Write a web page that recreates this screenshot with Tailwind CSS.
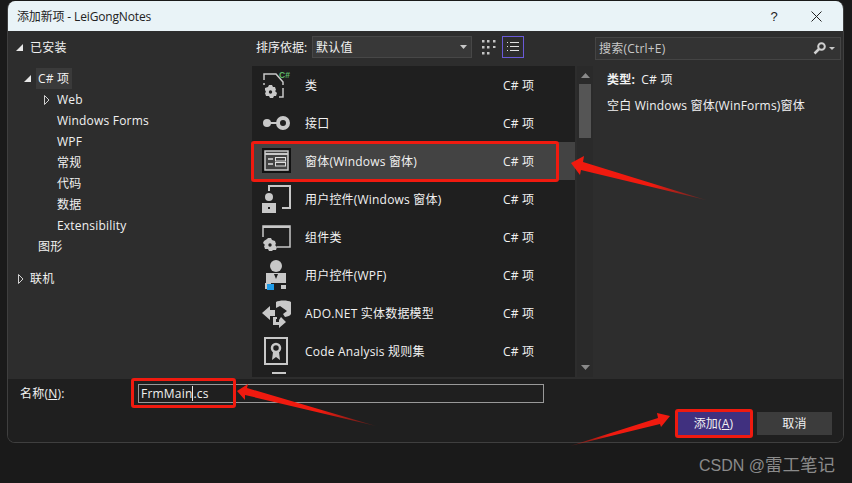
<!DOCTYPE html>
<html lang="zh">
<head>
    <meta charset="UTF-8">
    <title>添加新项 - LeiGongNotes</title>
    <script src="https://cdn.jsdelivr.net/npm/@tailwindcss/browser@4"></script>
</head>
<body>
<div class="relative w-[852px] h-[483px] overflow-hidden bg-[#1a1a1a] pt-px pl-[7px] font-['Open_Sans','Noto_Sans_CJK_SC',sans-serif] text-[12px] leading-[21px] tracking-[0.2px] text-[#f1f1f1]">

    <div class="w-[837px] h-[442px] flex flex-col rounded-[8px] overflow-hidden border-b border-x border-[#3f3f3f]">
        <!-- title bar -->
        <div class="h-[30px] shrink-0 flex items-center bg-[#e9f3f7] text-[#222] pl-[9px] tracking-[-0.15px]">
            <span class="grow">添加新项 - LeiGongNotes</span>
            <span class="w-[14px] text-center font-['Liberation_Sans'] text-[13px]">?</span>
            <svg class="ml-[30px] mr-[21px]" width="11" height="11" viewBox="0 0 11 11"><path d="M0.5 0.5 10.5 10.5M10.5 0.5 0.5 10.5" stroke="#222" fill="none"/></svg>
        </div>

        <!-- main -->
        <div class="h-[348px] shrink-0 flex bg-[#2d2d2d]">
            <!-- tree -->
            <div class="w-[244px] shrink-0 pt-[6px]">
                <div class="flex items-center h-[21px] pl-[8px]">
                    <svg width="7" height="7" viewBox="0 0 7 7"><path d="M7 0V7H0Z" fill="#e8e8e8"/></svg>
                    <span class="ml-[7px]">已安装</span>
                </div>
                <div class="flex items-center h-[21px] mt-[10px] pl-[16px]">
                    <svg width="7" height="7" viewBox="0 0 7 7"><path d="M7 0V7H0Z" fill="#e8e8e8"/></svg>
                    <span class="ml-[5px] px-[2px] bg-[#3a3a3a] w-[36px] whitespace-nowrap">C# 项</span>
                </div>
                <div class="flex items-center h-[21px] pl-[36px]">
                    <svg width="6" height="10" viewBox="0 0 6 10"><path d="M0.5 0.5 5 5 0.5 9.500Z" fill="none" stroke="#d0d0d0"/></svg>
                    <span class="ml-[7px]">Web</span>
                </div>
                <div class="h-[21px] pl-[49px]">Windows Forms</div>
                <div class="h-[21px] pl-[49px]">WPF</div>
                <div class="h-[21px] pl-[49px]">常规</div>
                <div class="h-[21px] pl-[49px]">代码</div>
                <div class="h-[21px] pl-[49px]">数据</div>
                <div class="h-[21px] pl-[49px]">Extensibility</div>
                <div class="h-[21px] pl-[30px]">图形</div>
                <div class="flex items-center h-[21px] mt-[11px] pl-[10px]">
                    <svg width="6" height="10" viewBox="0 0 6 10"><path d="M0.5 0.5 5 5 0.5 9.500Z" fill="none" stroke="#d0d0d0"/></svg>
                    <span class="ml-[6px]">联机</span>
                </div>
            </div>

            <!-- middle -->
            <div class="w-[342px] shrink-0 flex flex-col">
                <div class="h-[35px] shrink-0 flex items-center pl-[4px] pb-[3px]">
                    <span class="w-[56px] whitespace-nowrap tracking-normal">排序依据:</span>
                    <div class="w-[160px] h-[22px] flex items-center bg-[#383838] border border-[#474747] pl-[3px] pr-[4px]">
                        <span class="grow">默认值</span>
                        <svg width="7" height="4" viewBox="0 0 7 4"><path d="M0 0H7L3.500 4Z" fill="#c8c8c8"/></svg>
                    </div>
                    <svg class="ml-[10px]" width="14" height="15" viewBox="0 0 14 15" fill="#c4c4c4">
                        <path d="M0 0h2.500v2.500H0zM5 0h2.500v2.500H5zM11 0h2.500v2.500h-2.500zM0 6h2.500v2.500H0zM5 6h2.500v2.500H5zM11 6h2.500v2h-2.500zM0 12h2.500v2.500H0zM5 12h2.500v2.500H5z"/>
                    </svg>
                    <div class="ml-[6px] w-[22px] h-[22px] flex items-center justify-center border border-[#6a5ad8]">
                        <svg width="12" height="10" viewBox="0 0 12 10" fill="#e0e0e0"><path d="M0 0h1v1H0zM3 0h9v1H3zM0 4h1v1H0zM3 4h9v1H3zM0 8h1v1H0zM3 8h9v1H3z"/></svg>
                    </div>
                </div>
                <div class="flex grow h-0">
                    <div class="w-[323px] h-[311px] overflow-hidden bg-[#1f1f1f]">
                        <div class="h-[38px] flex items-center">
                            <svg class="ml-[10px] mr-[13px] shrink-0" width="30" height="30" viewBox="0 0 30 30" fill="none">
                                <path d="M2 10V4h12l7 8v3M21 18v9h-4M2 13v2" stroke="#c8c8c8" stroke-width="1.500"/>
                                <path d="M3 18l3-1 1-2 3 0 1 2 2 0 1 3-1 1 2 2-1 3-2 0-1 2-3 0-1-2-3 0-1-3 1-1-1-2z" fill="#c8c8c8"/>
                                <circle cx="8.500" cy="22" r="1.700" fill="#1f1f1f"/>
                                <text x="17" y="8" font-size="8.500" font-weight="700" fill="#5fbb6a" font-family="Liberation Sans" letter-spacing="0">C#</text>
                            </svg>
                            <span class="w-[198px]">类</span><span>C# 项</span>
                        </div>
                        <div class="h-[38px] flex items-center">
                            <svg class="ml-[10px] mr-[13px] shrink-0" width="30" height="30" viewBox="0 0 30 30" fill="none">
                                <circle cx="5" cy="15" r="4" fill="#c8c8c8"/>
                                <path d="M8 15h8" stroke="#c8c8c8" stroke-width="2"/>
                                <circle cx="21" cy="15" r="5" stroke="#c8c8c8" stroke-width="4"/>
                            </svg>
                            <span class="w-[198px]">接口</span><span>C# 项</span>
                        </div>
                        <div class="h-[38px] flex items-center bg-[#434343]">
                            <svg class="ml-[10px] mr-[13px] shrink-0" width="30" height="30" viewBox="0 0 30 30" fill="none">
                                <rect x="0" y="2" width="29" height="25" fill="#111"/>
                                <rect x="3" y="5" width="23" height="19" fill="#434343" stroke="#c8c8c8" stroke-width="1.500"/>
                                <path d="M3 8h23" stroke="#c8c8c8" stroke-width="2"/>
                                <path d="M6 13h5M6 18h5" stroke="#e0e0e0" stroke-width="1.500"/>
                                <rect x="13.500" y="11.500" width="10" height="3.500" stroke="#e0e0e0"/>
                                <rect x="13.500" y="16.500" width="10" height="3.500" stroke="#e0e0e0"/>
                            </svg>
                            <span class="w-[198px]">窗体(Windows 窗体)</span><span>C# 项</span>
                        </div>
                        <div class="h-[38px] flex items-center">
                            <svg class="ml-[10px] mr-[13px] shrink-0" width="30" height="30" viewBox="0 0 30 30" fill="none">
                                <path d="M7 7V2h21v22h-8" stroke="#c8c8c8" stroke-width="2"/>
                                <circle cx="7" cy="13" r="4" fill="#c8c8c8"/>
                                <path d="M0 19h14v10H0z" fill="#c8c8c8"/>
                                <rect x="6" y="23" width="2" height="2" fill="#1f1f1f"/>
                            </svg>
                            <span class="w-[198px]">用户控件(Windows 窗体)</span><span>C# 项</span>
                        </div>
                        <div class="h-[38px] flex items-center">
                            <svg class="ml-[10px] mr-[13px] shrink-0" width="30" height="30" viewBox="0 0 30 30" fill="none">
                                <path d="M1 15V4h27v21H15" stroke="#c8c8c8" stroke-width="1.500"/>
                                <path d="M1 5h27" stroke="#c8c8c8" stroke-width="2"/>
                                <path d="M2 19l3-2 1-1 3 0 1 2 3 1 1 3-1 1 2 2-1 3-3 0-1 1-3 0-1-2-3 0-1-3 1-1-2-2z" fill="#c8c8c8"/>
                                <circle cx="8" cy="23" r="1.700" fill="#1f1f1f"/>
                            </svg>
                            <span class="w-[198px]">组件类</span><span>C# 项</span>
                        </div>
                        <div class="h-[38px] flex items-center">
                            <svg class="ml-[10px] mr-[13px] shrink-0" width="30" height="30" viewBox="0 0 30 30" fill="none">
                                <circle cx="14" cy="6" r="6" fill="#c8c8c8"/>
                                <path d="M4 13h20v10H4z" fill="#c8c8c8"/>
                                <path d="M12 14l2 5 2-5z" fill="#1f1f1f"/>
                                <path d="M3 23h6v6H3zM19 25h5v4h-5z" fill="#c8c8c8"/>
                                <rect x="5" y="24" width="7" height="6" fill="#1e9be8"/>
                            </svg>
                            <span class="w-[198px]">用户控件(WPF)</span><span>C# 项</span>
                        </div>
                        <div class="h-[38px] flex items-center">
                            <svg class="ml-[10px] mr-[13px] shrink-0" width="30" height="30" viewBox="0 0 30 30" fill="none">
                                <path d="M14 4c3-2 12-2 15 0v12c-1 2-3 2-6 3l-2-3 4-3-7-5-4 2V4z" fill="#c8c8c8"/>
                                <path d="M0 15l8-7v4h5v6H8v4z" fill="#c8c8c8"/>
                                <path d="M11 19v8h6l0 3 7-6-5-5-2 3h-2v-3z" fill="#c8c8c8"/>
                                <path d="M14 21h3v3h-3z" fill="#1f1f1f"/>
                            </svg>
                            <span class="w-[198px]">ADO.NET 实体数据模型</span><span>C# 项</span>
                        </div>
                        <div class="h-[38px] flex items-center">
                            <svg class="ml-[10px] mr-[13px] shrink-0" width="30" height="30" viewBox="0 0 30 30" fill="none">
                                <rect x="3" y="2" width="22" height="26" stroke="#c8c8c8" stroke-width="2"/>
                                <circle cx="14" cy="12" r="4" stroke="#c8c8c8" stroke-width="2.500"/>
                                <path d="M11 16l-1 8 4-3 4 3-1-8" fill="#c8c8c8"/>
                            </svg>
                            <span class="w-[198px]">Code Analysis 规则集</span><span>C# 项</span>
                        </div>
                        <div class="h-[38px] pl-[20px] pt-[2px]">
                            <div class="w-[14px] h-[2px] bg-[#c8c8c8]"></div>
                        </div>
                    </div>
                    <!-- scrollbar -->
                    <div class="ml-[2px] w-[16px] h-[311px] flex flex-col items-center bg-[#2a2a2a] pt-[7px]">
                        <svg width="9" height="5" viewBox="0 0 9 5"><path d="M4.500 0 9 5H0Z" fill="#8a8a8a"/></svg>
                        <div class="mt-[6px] w-[12px] h-[54px] bg-[#555555]"></div>
                        <svg class="mt-auto mb-[7px]" width="9" height="5" viewBox="0 0 9 5"><path d="M4.500 5 9 0H0Z" fill="#8a8a8a"/></svg>
                    </div>
                </div>
            </div>

            <!-- details -->
            <div class="grow flex flex-col">
                <div class="mt-[6px] ml-[1px] w-[246px] h-[23px] flex items-center bg-[#333333] border border-[#444444] pl-[3px] pr-[5px] text-[#c8c8c8]">
                    <span class="grow">搜索(Ctrl+E)</span>
                    <svg width="13" height="13" viewBox="0 0 13 13" fill="none"><circle cx="8.500" cy="4.500" r="3.300" stroke="#d0d0d0" stroke-width="2"/><path d="M6 7 1.500 11.500" stroke="#d0d0d0" stroke-width="2.500"/></svg>
                    <svg class="ml-[3px]" width="6" height="3" viewBox="0 0 6 3"><path d="M0 0H6L3 3Z" fill="#c8c8c8"/></svg>
                </div>
                <div class="ml-[13px] mt-[9px]"><span class="font-bold">类型:</span> <span class="ml-[3px]">C# 项</span></div>
                <div class="ml-[13px] mt-[5px]">空白 Windows 窗体(WinForms)窗体</div>
            </div>
        </div>

        <!-- bottom bar -->
        <div class="grow bg-[#1f1f1f] relative">
            <div class="flex items-center h-[18px] mt-[5px] pl-[12px]">
                <span class="w-[118px]">名称(<u>N</u>):</span>
                <div class="w-[406px] h-[19px] border border-[#999999] pl-[2px] flex items-center">FrmMain<span class="w-px h-[15px] bg-[#e8e8e8]"></span>.cs</div>
            </div>
            <div class="flex justify-end gap-[5px] pr-[11px] mt-[10px]">
                <div class="w-[75px] h-[23px] bg-[#40307f] text-center leading-[23px] pr-[2px]">添加(<u>A</u>)</div>
                <div class="w-[75px] h-[23px] bg-[#3c3c3c] text-center leading-[23px]">取消</div>
            </div>
        </div>
    </div>

    <!-- red annotations drawn over the screenshot -->
    <div class="absolute left-[251px] top-[141px] w-[308px] h-[41px] border-[3px] border-[#f01a0f] rounded-[3px]"></div>
    <div class="absolute left-[131px] top-[378px] w-[105px] h-[30px] border-[3px] border-[#f01a0f] rounded-[3px]"></div>
    <div class="absolute left-[675px] top-[409px] w-[78px] h-[29px] border-[3px] border-[#f01a0f] rounded-[3px]"></div>
    <svg class="absolute left-0 top-0" width="852" height="483" viewBox="0 0 852 483">
        <defs>
            <linearGradient id="fadeA" x1="571" y1="163" x2="706" y2="200" gradientUnits="userSpaceOnUse"><stop offset="0.600" stop-color="#f01a0f"/><stop offset="1" stop-color="#f01a0f" stop-opacity="0.200"/></linearGradient>
            <linearGradient id="fadeB" x1="237" y1="391" x2="376" y2="426" gradientUnits="userSpaceOnUse"><stop offset="0.600" stop-color="#f01a0f"/><stop offset="1" stop-color="#f01a0f" stop-opacity="0.200"/></linearGradient>
            <linearGradient id="fadeC" x1="668" y1="416" x2="570" y2="446" gradientUnits="userSpaceOnUse"><stop offset="0.600" stop-color="#f01a0f"/><stop offset="1" stop-color="#f01a0f" stop-opacity="0.200"/></linearGradient>
        </defs>
        <path d="M571 163 584 156 583 162 706 200 581 170 580 175Z" fill="url(#fadeA)"/>
        <path d="M237 391 248 384 247 388 376 426 245 395 245 400Z" fill="url(#fadeB)"/>
        <path d="M670 416 657 413 658 418 570 446 660 424 661 427Z" fill="url(#fadeC)"/>
    </svg>

    <div class="absolute left-[699px] top-[454px] text-[16px] leading-[22px] tracking-normal text-[#8a8a8a] font-['Liberation_Sans','Noto_Sans_CJK_SC',sans-serif]">CSDN @<span class="text-[17.500px]">雷工笔记</span></div>
</div>
</body>
</html>
